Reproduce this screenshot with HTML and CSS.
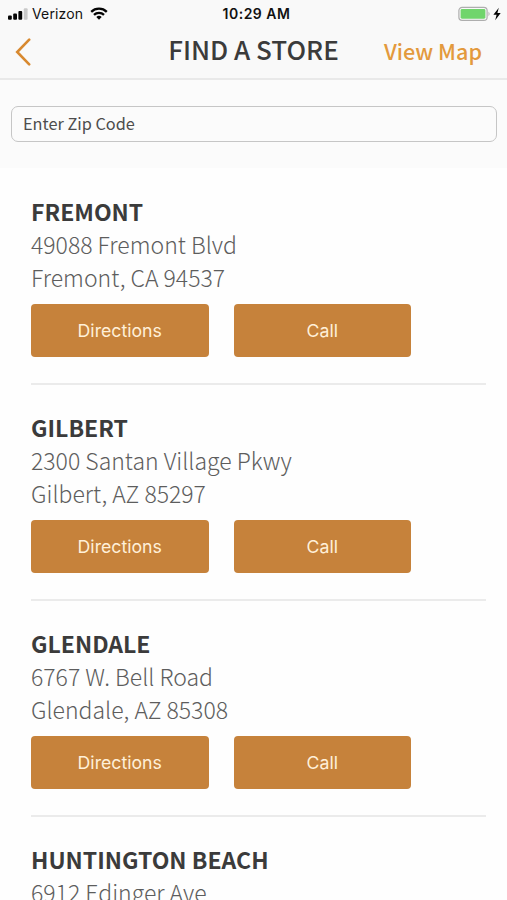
FILE: index.html
```html
<!DOCTYPE html>
<html lang="en">
<head>
<meta charset="utf-8">
<title>Find a Store</title>
<link rel="stylesheet" href="styles.css">
</head>
<body>
<header class="top">
  <div class="status">
    <div class="carrier">
      <svg class="signal" width="20" height="12" viewBox="0 0 20 12"><rect x="0" y="7.5" width="3.8" height="4.2" rx="1"/><rect x="5.2" y="5.5" width="3.8" height="6.2" rx="1"/><rect x="10.4" y="3" width="3.8" height="8.7" rx="1"/><rect class="off" x="15.8" y="0.3" width="3.8" height="11.4" rx="1"/></svg>
      <span class="network">Verizon</span>
      <svg class="wifi" width="18" height="13" viewBox="0 0 18 13"><path d="M1.2 4.8a11.2 11.2 0 0 1 15.6 0M4 7.9a7.1 7.1 0 0 1 10 0"/><path class="dot" d="M6.3 10.1a3.9 3.9 0 0 1 5.4 0L9 12.8z"/></svg>
    </div>
    <span class="time">10:29 AM</span>
    <svg class="battery" width="45" height="16" viewBox="0 0 45 16"><rect class="case" x="0.9" y="1.4" width="28.2" height="13" rx="3.2"/><rect class="charge" x="2.6" y="3.1" width="24.8" height="9.6" rx="1.4"/><path class="cap" d="M30.5 5.6q2.2 2.3 0 4.6z"/><path class="bolt" d="M40.8 1.8 35.4 8.8h3.2l-1.4 5.4 5.5-7.3h-3.3z"/></svg>
  </div>
  <nav class="nav">
    <svg class="back" width="18" height="28" viewBox="0 0 18 28"><path d="M15.2 1.7 3.2 14l12 12.3"/></svg>
    <h1 class="title">FIND A STORE</h1>
    <a class="map">View Map</a>
  </nav>
</header>
<section class="search"><div class="field"><span>Enter Zip Code</span></div></section>
<main class="stores">
  <article class="store">
    <h2 class="name">FREMONT</h2>
    <p class="line">49088 Fremont Blvd</p>
    <p class="line">Fremont, CA 94537</p>
    <div class="actions"><a class="button">Directions</a><a class="button">Call</a></div>
  </article>
  <article class="store">
    <h2 class="name">GILBERT</h2>
    <p class="line">2300 Santan Village Pkwy</p>
    <p class="line">Gilbert, AZ 85297</p>
    <div class="actions"><a class="button">Directions</a><a class="button">Call</a></div>
  </article>
  <article class="store">
    <h2 class="name">GLENDALE</h2>
    <p class="line">6767 W. Bell Road</p>
    <p class="line">Glendale, AZ 85308</p>
    <div class="actions"><a class="button">Directions</a><a class="button">Call</a></div>
  </article>
  <article class="store">
    <h2 class="name">HUNTINGTON BEACH</h2>
    <p class="line">6912 Edinger Ave</p>
  </article>
</main>
</body>
</html>
```

FILE: styles.css
```css
* { box-sizing: border-box; margin: 0; padding: 0; }
html, body { height: 900px; overflow: hidden; }
body {
  width: 507px;
  background: #fefefe;
  color: #3b3b3b;
  font-family: "Noto Sans CJK JP", "Noto Sans", sans-serif;
}
.top { height: 80px; background: #f9f9f9; border-bottom: 2px solid #e9e9e9; }
.status {
  height: 27px;
  display: grid;
  grid-template-columns: 1fr auto 1fr;
  align-items: center;
  padding: 0 4px 0 8px;
  font-family: Inter, sans-serif;
  font-size: 14px;
  line-height: 27px;
  color: #111;
}
.carrier { display: flex; align-items: center; }
.signal { fill: #050505; margin-right: 4px; }
.signal .off { fill: #c9c9c9; }
.network { letter-spacing: 0.15px; }
.wifi { margin-left: 7px; fill: none; stroke: #050505; stroke-width: 2.3; }
.wifi .dot { fill: #050505; stroke: none; }
.time { padding-left: 2px; font-weight: 600; letter-spacing: 0.5px; }
.battery { justify-self: end; }
.battery .case { fill: none; stroke: #aeaeae; stroke-width: 1.2; }
.battery .charge { fill: #70d56c; }
.battery .cap { fill: #aeaeae; }
.battery .bolt { fill: #050505; }
.nav {
  height: 50px;
  display: grid;
  grid-template-columns: 1fr auto 1fr;
  align-items: center;
  padding: 0 25px 0 14px;
}
.back { fill: none; stroke: #d8892f; stroke-width: 2.6; stroke-linecap: round; }
.title { padding: 0 0 7px 11px; font-size: 26px; font-weight: 500; line-height: 43px; }
.map { justify-self: end; padding-bottom: 3px; font-size: 21.6px; font-weight: 500; line-height: 45px; color: #e39a3d; }
.search { height: 88px; padding: 26px 10px 0 11px; background: #fbfbfb; }
.field {
  height: 36px;
  padding-left: 11px;
  border: 1.5px solid #c6c6c6;
  border-radius: 7px;
  font-size: 16.3px;
  line-height: 33px;
  color: #4d4d4d;
}
.stores { padding: 27px 21px 0 31px; }
.store { height: 216px; }
.name { font-size: 23px; font-weight: 700; line-height: 33px; }
.line { font-size: 23px; font-weight: 300; line-height: 32.5px; color: #5d5d5d; white-space: nowrap; }
.actions {
  display: flex;
  gap: 25px;
  height: 92px;
  padding: 11px 0 26px;
  border-bottom: 2px solid #ebebeb;
}
.button {
  width: 177.5px;
  border-radius: 4px;
  background: #c6823b;
  color: #fff0d9;
  font-family: Inter, sans-serif;
  font-size: 17.7px;
  line-height: 54px;
  text-align: center;
}
```
